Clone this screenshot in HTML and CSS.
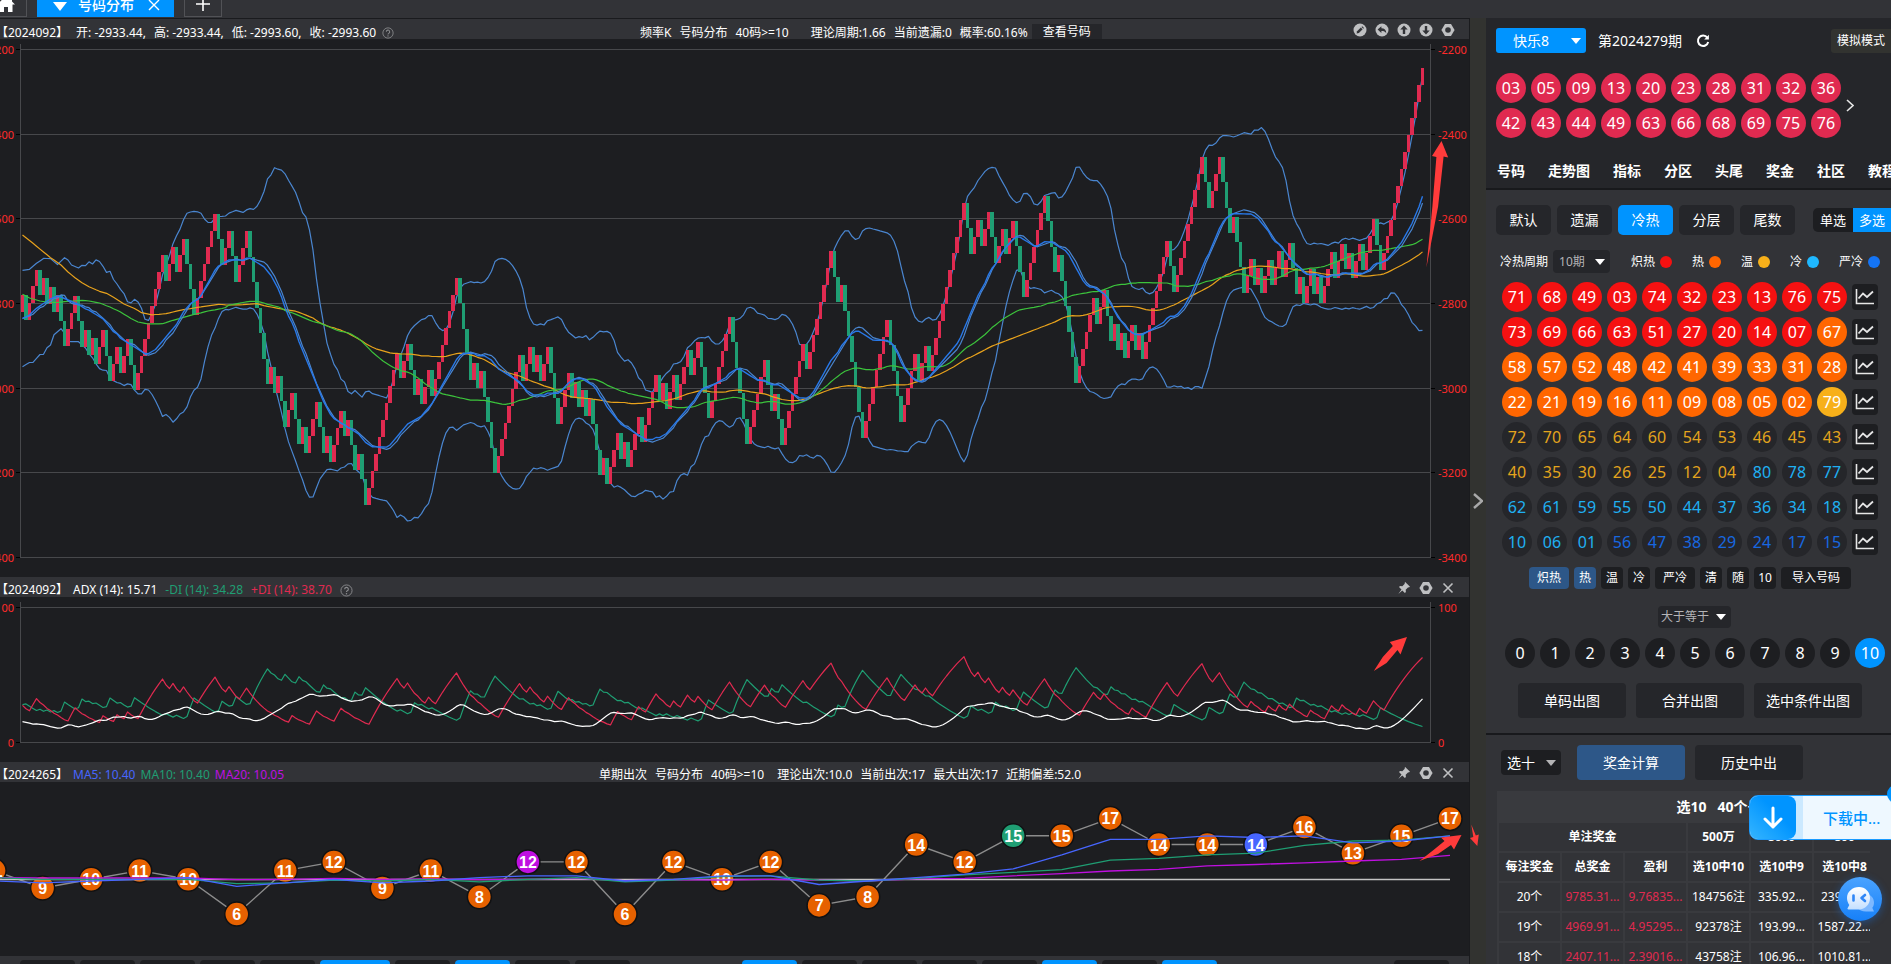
FILE: index.html
```html
<!DOCTYPE html>
<html lang="zh-CN">
<head>
<meta charset="utf-8">
<title>号码分布</title>
<link rel="stylesheet" href="styles.css">
</head>
<body>
<svg class="sprite" aria-hidden="true">
  <symbol id="i-help" viewBox="0 0 14 14"><circle cx="7" cy="7" r="6" fill="none" stroke="currentColor"/><path d="M5 5.6a2 2 0 1 1 2.9 1.8c-.6.3-.9.6-.9 1.3" fill="none" stroke="currentColor" stroke-width="1.2"/><circle cx="7" cy="10.4" r=".8" fill="currentColor"/></symbol>
  <symbol id="i-edit" viewBox="0 0 14 14"><circle cx="7" cy="7" r="6.5" fill="currentColor"/><path d="M3.6 10.6l.5-2.3 3.7-3.8 1.8 1.8-3.7 3.7z" fill="#323337"/><path d="M8.5 3.9l.7-.7 1.8 1.8-.7.7z" fill="#323337"/></symbol>
  <symbol id="i-undo" viewBox="0 0 14 14"><circle cx="7" cy="7" r="6.5" fill="currentColor"/><path d="M2.6 6.6L6.4 3.2v2c3 0 4.8 1.6 4.9 5.2-1-1.700-2.400-2.300-4.900-2.300v1.900z" fill="#323337"/></symbol>
  <symbol id="i-up" viewBox="0 0 14 14"><circle cx="7" cy="7" r="6.500" fill="currentColor"/><path d="M7 2.600l3.700 4H8.200V11H5.800V6.600H3.300z" fill="#323337"/></symbol>
  <symbol id="i-down" viewBox="0 0 14 14"><circle cx="7" cy="7" r="6.500" fill="currentColor"/><path d="M7 11.400l3.700-4H8.200V3H5.800v4.400H3.300z" fill="#323337"/></symbol>
  <symbol id="i-nut" viewBox="0 0 14 14"><path d="M4 1h6l3.600 6L10 13H4L.4 7z" fill="currentColor"/><circle cx="7" cy="7" r="2.800" fill="#323337"/></symbol>
  <symbol id="i-pin" viewBox="0 0 14 14"><path d="M8.200 1l4.800 4.800-1.200.6-.6-.2-2.500 2.500.2 2.300-1 1L5.300 9.400 1.300 13l3.200-4.500L2 6l1-1 2.300.2 2.500-2.500-.2-.6z" fill="currentColor"/></symbol>
  <symbol id="i-close" viewBox="0 0 14 14"><path d="M2.500 2.500l9 9m0-9l-9 9" stroke="currentColor" stroke-width="1.600" fill="none"/></symbol>
  <symbol id="i-trend" viewBox="0 0 20 18"><path d="M1.500 1v14.500H19" fill="none" stroke="currentColor" stroke-width="1.600"/><path d="M3.500 10.500l4.500-5 4 3.500 6-5.500" fill="none" stroke="currentColor" stroke-width="1.800"/></symbol>
</svg>

<header class="tabs">
  <button class="tab tab-home" aria-label="首页"><svg class="home" viewBox="0 0 18 18"><path d="M9 1L0 9.500h2.500V17H7v-5h4v5h4.500V9.500H18L15 6.600V2.500h-2.200v2z" fill="#fff"/></svg></button>
  <div class="tab tab-active">
    <svg class="tab-arrow" viewBox="0 0 14 9"><path d="M0 0h14L7 9z" fill="#fff"/></svg>
    <span>号码分布</span>
    <button class="tab-close" aria-label="关闭"><svg viewBox="0 0 12 12"><path d="M1 1l10 10M11 1L1 11" stroke="#fff" stroke-width="1.400"/></svg></button>
  </div>
  <button class="tab tab-add" aria-label="新增"><svg viewBox="0 0 14 14"><path d="M7 0v14M0 7h14" stroke="#fff" stroke-width="1.600"/></svg></button>
</header>

<div class="body">
  <main class="charts">
    <section class="pane">
      <div class="pane-head pane-head-first">
        <div class="info info-ohlc"><span>【2024092】</span><span>开: -2933.44,</span><span>高: -2933.44,</span><span>低: -2993.60,</span><span>收: -2993.60</span><svg class="help"><use href="#i-help"/></svg></div>
        <div class="center"><span>频率K</span><span>号码分布</span><span class="wide">40码&gt;=10</span><span>理论周期:1.66</span><span>当前遗漏:0</span><span>概率:60.16%</span><button class="view">查看号码</button></div>
        <div class="tools">
          <button aria-label="编辑"><svg><use href="#i-edit"/></svg></button><button aria-label="撤销"><svg><use href="#i-undo"/></svg></button><button aria-label="上移"><svg><use href="#i-up"/></svg></button><button aria-label="下移"><svg><use href="#i-down"/></svg></button><button aria-label="设置"><svg><use href="#i-nut"/></svg></button>
        </div>
      </div>
      <svg id="kchart" class="plot" viewBox="0 39 1469 538"></svg>
    </section>
    <section class="pane">
      <div class="pane-head">
        <div class="info info-adx"><span>【2024092】</span><span>ADX (14): 15.71</span><span class="green">-DI (14): 34.28</span><span class="red">+DI (14): 38.70</span><svg class="help"><use href="#i-help"/></svg></div>
        <div class="tools">
          <button aria-label="固定"><svg><use href="#i-pin"/></svg></button><button aria-label="设置"><svg><use href="#i-nut"/></svg></button><button aria-label="关闭"><svg><use href="#i-close"/></svg></button>
        </div>
      </div>
      <svg id="adx" class="plot" viewBox="0 597 1469 165"></svg>
    </section>
    <section class="pane">
      <div class="pane-head">
        <div class="info"><span>【2024265】</span><span class="blue">MA5: 10.40</span><span class="green">MA10: 10.40</span><span class="purple">MA20: 10.05</span></div>
        <div class="center center-counts"><span>单期出次</span><span>号码分布</span><span class="wide">40码&gt;=10</span><span>理论出次:10.0</span><span>当前出次:17</span><span>最大出次:17</span><span>近期偏差:52.0</span></div>
        <div class="tools">
          <button aria-label="固定"><svg><use href="#i-pin"/></svg></button><button aria-label="设置"><svg><use href="#i-nut"/></svg></button><button aria-label="关闭"><svg><use href="#i-close"/></svg></button>
        </div>
      </div>
      <svg id="counts" class="plot" viewBox="0 782 1469 174"></svg>
    </section>
    <div class="strip" id="strip"></div>
  </main>

  <button class="gutter" aria-label="收起"><svg viewBox="0 0 10 16"><path d="M1 1l8 7-8 7" fill="none" stroke="#a9a9a9" stroke-width="2.400"/></svg></button>

  <aside class="panel">
    <section class="draw">
      <div class="draw-head">
        <button class="game"><span>快乐8</span><i class="caret"></i></button>
        <span class="issue">第2024279期</span>
        <button class="plain" aria-label="刷新"><svg class="refresh" viewBox="0 0 14 14"><path d="M11.300 3.600A5.200 5.200 0 1 0 12.200 8" fill="none" stroke="#fff" stroke-width="2"/><path d="M12.900.8v4.800H8.200z" fill="#fff"/></svg></button>
        <button class="mode">模拟模式</button>
      </div>
      <div class="result">
        <div class="balls" id="result"></div>
        <button class="plain" aria-label="下一期"><svg class="next" viewBox="0 0 8 13"><path d="M1 1l6 5.500L1 12" fill="none" stroke="#e4e4e4" stroke-width="1.600"/></svg></button>
      </div>
      <nav class="nav"><a href="#a1">号码</a><a href="#a2">走势图</a><a href="#a3">指标</a><a href="#a4">分区</a><a href="#a5">头尾</a><a href="#a6">奖金</a><a href="#a7">社区</a><a href="#a8">教程</a></nav>
    </section>

    <section class="pick">
      <div class="modes">
        <button>默认</button><button>遗漏</button><button class="on">冷热</button><button>分层</button><button>尾数</button>
        <div class="seg"><button>单选</button><button class="on">多选</button></div>
      </div>
      <div class="legend">
        <label class="period" for="period">冷热周期</label>
        <span class="select select-period"><select id="period"><option>10期</option></select><i class="caret"></i></span>
        <span class="key">炽热<i class="dot c-red"></i></span><span class="key">热<i class="dot c-orange"></i></span><span class="key">温<i class="dot c-amber"></i></span><span class="key">冷<i class="dot c-cyan"></i></span><span class="key">严冷<i class="dot c-blue"></i></span>
      </div>
      <div class="grid" id="grid"></div>
      <div class="chips"><button class="w40 on">炽热</button><button class="on">热</button><button>温</button><button>冷</button><button class="w40">严冷</button><button>清</button><button>随</button><button>10</button><button class="w70">导入号码</button></div>
      <span class="select select-op"><select id="op" aria-label="条件"><option>大于等于</option></select><i class="caret"></i></span>
      <div class="amount" id="amount"></div>
      <div class="actions"><button>单码出图</button><button>合并出图</button><button>选中条件出图</button></div>
    </section>

    <section class="prize">
      <div class="prize-head">
        <span class="select select-play"><select id="play" aria-label="玩法"><option>选十</option></select><i class="caret caret-dim"></i></span>
        <button class="on">奖金计算</button><button>历史中出</button>
      </div>
      <div class="table-wrap">
        <table>
          <colgroup><col><col><col><col><col><col><col class="rest"></colgroup>
          <thead>
            <tr class="title"><th colspan="7">选10&nbsp;&nbsp; 40个号码</th></tr>
            <tr><th colspan="3">单注奖金</th><th>500万</th><th>8000</th><th>800</th><th>80</th></tr>
            <tr><th>每注奖金</th><th>总奖金</th><th>盈利</th><th>选10中10</th><th>选10中9</th><th>选10中8</th><th>选10中7</th></tr>
          </thead>
          <tbody>
            <tr><td>20个</td><td class="red">9785.31...</td><td class="red">9.76835...</td><td>184756注</td><td>335.92...</td><td>239.43...</td><td></td></tr>
            <tr><td>19个</td><td class="red">4969.91...</td><td class="red">4.95295...</td><td>92378注</td><td>193.99...</td><td>1587.22...</td><td></td></tr>
            <tr><td>18个</td><td class="red">2407.11...</td><td class="red">2.39016...</td><td>43758注</td><td>106.96...</td><td>1010.81...</td><td></td></tr>
          </tbody>
        </table>
      </div>
    </section>

    <div class="download">
      <span class="download-icon"><svg viewBox="0 0 20 24"><path d="M10 2v19M2 13l8 8 8-8" fill="none" stroke="#fff" stroke-width="3" stroke-linecap="round" stroke-linejoin="round"/></svg></span>
      <span class="download-text">下载中...</span>
      <i class="download-badge"></i>
    </div>
    <button class="chat" aria-label="客服">
      <svg viewBox="0 0 44 44">
        <defs><linearGradient id="bub" x1="0" y1="0" x2="0" y2="1"><stop offset="0" stop-color="#fff"/><stop offset="1" stop-color="#c4dfff"/></linearGradient></defs>
        <path d="M29 17c4 1 7 4 7 8.500 0 2-.6 4-1.700 5.300L36 34.500h-8c-4 0-7-1.500-8.500-4z" fill="#7db8ff"/>
        <path d="M21 10c6.200 0 11 4.700 11 11s-4.800 11.500-11 11.500H10.500c-1 0-1.300-.8-.8-1.500l1.600-3C10 26 9 23.800 9 21c0-6.300 5.500-11 12-11z" fill="url(#bub)"/>
        <path d="M15.500 18.500v5M27 18l-3.500 3 3.500 3" fill="none" stroke="#2f86f6" stroke-width="2.600" stroke-linecap="round" stroke-linejoin="round"/>
      </svg>
    </button>
  </aside>
</div>

<svg class="marks" viewBox="0 0 1891 964" aria-hidden="true">
  <g fill="#ff3b3b">
    <path d="M1441.500 141l6.700 16.500-4.600-1-5.500 50-11.700 61 6-61 4-49.500-4.400-1z"/>
    <path d="M1407 637l-6.500 17.500-3-4.500-11 13-12.700 8 9-14 10-11-3-4z"/>
    <path d="M1461.500 835l-7.500 14.500-3-4.500-13 9-18.500 7 14-11 11-9-3.500-3.500z"/>
    <path d="M1471.300 824.500l4.500 11 3-1-1.500 11.500-7.300-8 3.300-1z"/>
  </g>
</svg>
<script src="script.js"></script>
</body>
</html>
```

FILE: styles.css
```css
* { box-sizing: border-box; }

html, body { height: 100%; }

body {
  margin: 0;
  display: flex;
  flex-direction: column;
  overflow: hidden;
  background: #323337;
  color: #fff;
  font: 12px/16px "Noto Sans", "Noto Sans CJK SC", sans-serif;
}

button, select {
  margin: 0;
  padding: 0;
  border: 0;
  background: none;
  color: inherit;
  font: inherit;
  white-space: nowrap;
  cursor: pointer;
}

i { font-style: normal; }

.sprite { position: absolute; width: 0; height: 0; }

.red { color: #e02a50; }
.green { color: #1f9e73; }
.blue { color: #4766ff; }
.purple { color: #bf10e0; }

/* window tabs, scrolled partly out of view */
.tabs {
  flex: none;
  height: 18px;
  display: flex;
  align-items: flex-end;
  gap: 10px;
  padding-bottom: 1px;
}

.tab {
  height: 26px;
  display: flex;
  align-items: center;
  border: 1px solid #515256;
}

.tab-home { width: 27px; border-left: 0; }
.home { width: 18px; height: 18px; margin-left: -3px; }

.tab-active {
  width: 137px;
  padding: 2px 14px 0 16px;
  border: 0;
  background: #0094ff;
  font-size: 14px;
  line-height: 20px;
  font-weight: 500;
}
.tab-arrow { width: 14px; height: 9px; margin: 3px 11px 0 0; }
.tab-close { margin-left: auto; display: flex; }
.tab-close svg { width: 12px; height: 12px; }
.tab-add { width: 38px; justify-content: center; }
.tab-add svg { width: 14px; height: 14px; }

.body { flex: 1; min-height: 0; display: flex; }

/* charts */
.charts {
  flex: 1;
  min-width: 0;
  display: flex;
  flex-direction: column;
  border-right: 1px solid #1a1b1e;
}

.pane { flex: none; background: #1d1e21; }

.pane-head {
  position: relative;
  height: 20px;
  display: flex;
  align-items: flex-end;
  justify-content: space-between;
  background: #323337;
  line-height: 14px;
  white-space: nowrap;
}
.pane-head-first { height: 21px; border-top: 1px solid #1a1b1e; line-height: 12px; }

.info { display: flex; align-items: center; gap: 5px; margin-left: -4px; }
.info-ohlc, .info-adx { gap: 8px; }
.info-adx span:first-child { margin-right: -3px; }
.help { width: 13px; height: 13px; color: #8b8c8f; }
.info-ohlc .help { width: 12px; height: 12px; margin-left: -2px; }

.center {
  position: absolute;
  left: 640px;
  bottom: 0;
  display: flex;
  align-items: flex-end;
  gap: 8px;
}
.center .wide { margin-right: 14px; }
.center-counts { left: 599px; }
.center-counts .wide { margin-right: 5px; }
.view { width: 70px; height: 15px; margin-left: -4px; background: #25262a; }

.tools { display: flex; gap: 8px; padding: 0 14px 2px 0; color: #bfc0c2; }
.tools button { display: flex; }
.tools svg { width: 14px; height: 14px; }

.plot { display: block; width: 100%; height: auto; }
.plot text { font: 11px "Noto Sans", "Noto Sans CJK SC", sans-serif; fill: #ff2b2b; }
.plot .node-label { font: bold 16px "Liberation Sans", Arial, sans-serif; fill: #fff; text-anchor: middle; }
.axis { stroke: #47484b; fill: none; }
.tick { stroke: #000; fill: none; }
.line { fill: none; stroke-linejoin: round; }
.candles { shape-rendering: crispEdges; }

.strip {
  flex: 1;
  min-height: 0;
  overflow: hidden;
  display: flex;
  gap: 5px;
  padding: 4px 20px 0;
  background: #323337;
}
.strip button {
  flex: none;
  width: 55px;
  height: 24px;
  border-radius: 4px;
  background: #1d1e21;
}
.strip .long { width: 70px; }
.strip .on { background: #0094ff; }
.strip .after-gap { margin-left: 107px; }
.strip .last { margin-left: auto; }

.gutter {
  flex: none;
  width: 16px;
  display: flex;
  align-items: center;
  justify-content: center;
  background: #323330;
}
.gutter svg { width: 10px; height: 16px; margin-top: 20px; }

/* right panel */
.panel {
  position: relative;
  flex: none;
  width: 405px;
  overflow: hidden;
  display: flex;
  flex-direction: column;
}

.panel section { flex: none; }

.draw {
  height: 172px;
  padding: 10px 0 0 10px;
  background: #25262a;
  border-bottom: 2px solid #18191c;
}

.draw-head { display: flex; align-items: center; font-size: 14px; line-height: 20px; }

.game {
  width: 90px;
  height: 25px;
  display: flex;
  align-items: center;
  justify-content: space-between;
  padding: 0 5px 0 17px;
  border-radius: 3px;
  background: #0094ff;
}
.issue { margin: 0 14px 0 12px; }
.plain { display: flex; }
.refresh { width: 14px; height: 14px; }
.mode {
  margin-left: auto;
  width: 60px;
  height: 24px;
  flex: none;
  border-radius: 3px 0 0 3px;
  background: #323330;
  font-size: 12px;
}

.caret {
  flex: none;
  border: 5px solid transparent;
  border-top: 6px solid #fff;
  border-bottom: 0;
  pointer-events: none;
}
.caret-dim { border-top-color: #b4b4b6; }

.result { display: flex; align-items: center; gap: 5px; margin-top: 20px; }
.balls { display: grid; grid-template-columns: repeat(10, 30px); gap: 5px; }
.ball {
  width: 30px;
  height: 30px;
  border-radius: 50%;
  display: flex;
  align-items: center;
  justify-content: center;
  font-size: 16px;
  line-height: 30px;
  background: #25262a;
}
.balls .ball { background: #e02a50; }
.next { width: 8px; height: 13px; }

.nav {
  display: flex;
  gap: 23px;
  margin-top: 23px;
  padding-left: 1px;
  white-space: nowrap;
  font-size: 14px;
  line-height: 20px;
  font-weight: bold;
}
.nav a { color: #fff; text-decoration: none; }

.pick { padding: 15px 0 15px 10px; border-bottom: 2px solid #18191c; }

.modes { display: flex; align-items: center; gap: 6px; font-size: 14px; }
.modes > button { width: 55px; height: 30px; border-radius: 5px; background: #25262a; }
.modes .on { background: #0094ff; }
.seg { display: flex; margin: 0 0 0 auto; border-radius: 5px 0 0 5px; overflow: hidden; background: #1d1e21; font-size: 13px; }
.seg button { width: 40px; height: 24px; }
.seg .on { width: 38px; }

.legend { display: flex; align-items: center; margin-top: 15px; padding-left: 4px; white-space: nowrap; }
.period { margin-right: 5px; }
.select { position: relative; display: inline-flex; align-items: center; border-radius: 4px; background: #25262a; color: #b4b4b6; }
.select select { appearance: none; width: 100%; height: 100%; outline: 0; }
.select .caret { position: absolute; right: 5px; }
.select-period { flex: none; width: 57px; height: 23px; padding-left: 6px; margin-right: 21px; }
.key { flex: none; display: flex; align-items: center; gap: 5px; margin-right: 20px; }
.dot { width: 12px; height: 12px; border-radius: 50%; }
.c-red { background: #f51111; }
.c-orange { background: #ff6600; }
.c-amber { background: #f7b01a; }
.c-cyan { background: #1fb8ff; }
.c-blue { background: #1474f5; }

.grid {
  display: grid;
  grid-template-columns: repeat(10, 30px) 26px;
  gap: 5px;
  align-items: center;
  margin: 9px 0 0 6px;
}
.t-amber { color: #e3a41d; }
.t-cyan { color: #1fb0f2; }
.t-blue { color: #1768e0; }
.trend {
  width: 26px;
  height: 26px;
  display: flex;
  align-items: center;
  justify-content: center;
  border-radius: 4px;
  background: #1d1e21;
  color: #e6e6e6;
}
.trend svg { width: 20px; height: 18px; }

.chips { display: flex; gap: 5px; margin: 10px 0 0 33px; }
.chips button { width: 22px; height: 22px; border-radius: 4px; background: #1d1e21; }
.chips .w40 { width: 40px; }
.chips .w70 { width: 70px; }
.chips .on { background: #2d5788; }

.select-op { display: flex; width: 73px; height: 22px; margin: 17px 0 0 162px; padding-left: 3px; }

.amount { display: flex; gap: 5px; margin: 10px 0 0 9px; }
.amount .ball { background: #1d1e21; }
.amount .on { background: #0094ff; }

.actions { display: flex; gap: 10px; margin: 15px 0 0 22px; }
.actions button, .prize-head button {
  width: 108px;
  height: 35px;
  border-radius: 4px;
  background: #25262a;
  font-size: 14px;
  line-height: 20px;
}

.prize { padding: 10px 21px 0 11px; }
.prize-head { display: flex; align-items: center; gap: 10px; padding-left: 4px; }
.prize-head .on { background: #2d5788; }
.select-play { width: 60px; height: 25px; margin-right: 6px; padding-left: 6px; background: #1d1e21; color: #fff; font-size: 14px; }

.table-wrap { margin-top: 11px; overflow: hidden; }
table {
  table-layout: fixed;
  width: 456px;
  border-spacing: 0;
  border-collapse: collapse;
}
col { width: 63px; }
.rest { width: 78px; }
th, td {
  height: 30px;
  padding: 0;
  border: 2px solid #393a3e;
  text-align: center;
  white-space: nowrap;
}
.title th { background: #393a3e; font-size: 14px; }

/* floating widgets */
.download {
  position: absolute;
  left: 263px;
  top: 777px;
  width: 160px;
  height: 45px;
  display: flex;
  align-items: center;
  border: 1px solid #1a9bff;
  border-radius: 9px;
  background: linear-gradient(90deg, #cbe9ff 53px, #eef8ff 53px);
}
.download-icon {
  width: 46px;
  height: 43px;
  display: flex;
  align-items: center;
  justify-content: center;
  border-radius: 8px;
  background: linear-gradient(45deg, #35b5ff, #0094ff 60%);
}
.download-icon svg { width: 20px; height: 24px; }
.download-text { margin-left: 27px; color: #0094ff; font-size: 15px; line-height: 20px; font-weight: 500; }
.download-badge { position: absolute; left: 137px; top: -11px; width: 18px; height: 18px; border-radius: 50%; background: #0094ff; }

.chat {
  position: absolute;
  left: 352px;
  top: 859px;
  width: 44px;
  height: 44px;
  border-radius: 50%;
  background: linear-gradient(180deg, #4aa3ff, #1780f8);
  box-shadow: 0 2px 8px rgba(20, 120, 250, .4);
}
.chat svg { display: block; width: 44px; height: 44px; }

.marks { position: absolute; left: 0; top: 0; width: 100%; height: auto; pointer-events: none; }
```

FILE: script.js
```js
const NS = 'http://www.w3.org/2000/svg';

function add(parent, name, attrs, text) {
  const el = document.createElementNS(NS, name);
  for (const key in attrs) el.setAttribute(key, attrs[key]);
  if (text !== undefined) el.textContent = text;
  parent.appendChild(el);
  return el;
}

function line(parent, points, stroke, width) {
  const d = points.map(p => p[0].toFixed(1) + ',' + p[1].toFixed(1)).join(' ');
  add(parent, 'polyline', { points: d, stroke, 'stroke-width': width || 1.2, class: 'line' });
}

const mean = list => list.reduce((a, b) => a + b, 0) / list.length;

/* Linear interpolation through [index, value] anchors */
function sample(anchors, i) {
  for (let k = 1; k < anchors.length; k++) {
    const [a, b] = [anchors[k - 1], anchors[k]];
    if (i <= b[0]) return a[1] + (b[1] - a[1]) * (i - a[0]) / (b[0] - a[0]);
  }
  return anchors[anchors.length - 1][1];
}

/* U: hit, D: miss */
const RUN = [
  'UDUUUDUDUD', 'UDDUUUDDUD', 'UDUUDDUUDU', 'UDDUUUUUUU', 'UDUUDUUDDD',
  'UUUUUUDDUU', 'DDUUUDDDDD', 'DUDUDDUUDD', 'UDUUUDDUDU', 'UUDUDDUDDU',
  'UUUUUUUUDU', 'UDDUDUUDUU', 'UUUUUDDDDU', 'DUDDDDUUUU', 'UUUDUUDUDU',
  'UDDDUUUDUD', 'UDUDDDUDUU', 'UDUDUUUDUU', 'UUDUDUUDUU', 'UDUUDDDUUU',
  'UUUDDDDDUU', 'UUUDDUDDUU', 'UUUUDUUUUU', 'UUDDUDDDDD', 'DUUUUUUUDD',
  'DDUUUUDUUD', 'UUUUUUUUUU', 'DDUUDUUDDU', 'UDUUDDDUUU', 'UUUDDDUDDD',
  'DDUUUUUDUU', 'DDUDUDUUDU', 'DUUUUUUUDD', 'UUUUUUUUDD', 'UUUDDDUDDD',
  'UUDUDUUDUU', 'DUUDDUDUUD', 'UDUUUDUUDU', 'DUUDUUUDDU', 'UUUUUUUUUUU'
].join('');

const UP = 39.84, DOWN = 60.16;
const SCALE = 508 / 1200;
const yOf = v => 49.5 + (-2200 - v) * SCALE;
const vOf = y => -2200 - (y - 49.5) / SCALE;
const xOf = i => 22.5 + 3.5 * i;

const bars = [];
let price = vOf(311.5);
for (const step of RUN) {
  const open = price;
  price += step === 'U' ? UP : -DOWN;
  bars.push({ up: step === 'U', open, close: price, high: Math.max(open, price), low: Math.min(open, price) });
}
const closes = bars.map(b => b.close);

const seedUpper = [[0, 270.3], [2, 269.3], [4, 263.3], [6, 258.4], [8, 258.6], [10, 264.5], [12, 257.7], [13, 260], [14, 265], [16, 268], [17, 265.3], [18, 265.6], [19, 262.5]];
const seedLower = [[0, 366.7], [2, 362.5], [3, 362.3], [5, 354.5], [6, 354.3], [7, 347.7], [8, 345], [9, 334.7], [11, 328.7], [12, 333], [13, 341.5], [16, 341.7], [18, 348], [19, 352]];
const seedFast = [[0, 318.5], [2, 315], [4, 308.3], [6, 303.5], [8, 299], [10, 296], [11, 297], [13, 300], [16, 304.5], [20, 313]];
const seedMid = [[0, 294.3], [2, 298], [5, 301], [7, 302], [10, 302.5], [13, 301.3], [17, 300.4], [19, 301], [22, 303], [25, 307], [28, 312], [31, 318.5], [33, 322], [36, 324], [40, 323.7], [43, 320.3], [46, 317.3], [49, 314.5], [53, 311], [57, 308.5], [59, 306.5]];
const seedSlow = [[0, 235], [3, 243.3], [6, 252], [8, 257.7], [11, 265], [13, 272], [15, 277.7], [17, 282.7], [19, 286.7], [22, 291.3], [24, 293.3], [26, 297.3], [29, 304], [32, 308.5], [34, 312.7], [37, 314.8], [41, 313.7], [45, 310.3], [49, 308], [52, 306.3], [56, 304.3], [59, 305], [63, 304.7], [67, 303.7], [69, 305.7], [72, 307.7], [75, 309.7], [78, 311.2], [80, 313.7], [83, 318], [85, 322.7], [87, 325.7], [90, 329.7]];

function average(period, seed) {
  return closes.map((_, i) => [xOf(i), i < period - 1 ? sample(seed, i) : yOf(mean(closes.slice(i - period + 1, i + 1)))]);
}

/* Middle line averages the N-1 bars before the current one */
function bands(period) {
  const out = { upper: [], mid: [], lower: [] };
  closes.forEach((_, i) => {
    let u, m, l;
    if (i < period - 1) {
      u = sample(seedUpper, i);
      l = sample(seedLower, i);
      m = (u + l) / 2;
    } else {
      const win = closes.slice(i - period + 1, i + 1);
      const avg = mean(win);
      const dev = Math.sqrt(mean(win.map(c => (c - avg) ** 2)));
      const mid = mean(win.slice(0, -1));
      u = yOf(mid + 2 * dev);
      m = yOf(mid);
      l = yOf(mid - 2 * dev);
    }
    out.upper.push([xOf(i), u]);
    out.mid.push([xOf(i), m]);
    out.lower.push([xOf(i), l]);
  });
  return out;
}

function frame(svg, levels, top, bottom) {
  for (const [label, y] of levels) {
    add(svg, 'path', { d: `M20 ${y}H1431`, class: 'axis' });
    add(svg, 'path', { d: `M16 ${y}H20M1431 ${y}H1435`, class: 'tick' });
    add(svg, 'text', { x: 14, y: y + 4, 'text-anchor': 'end' }, label);
    add(svg, 'text', { x: 1438, y: y + 4 }, label);
  }
  add(svg, 'path', { d: `M20.5 ${top}V${bottom}M1430.500 ${top}V${bottom}`, class: 'axis' });
}

function drawK() {
  const svg = document.getElementById('kchart');
  frame(svg, [['-2200', 49.5], ['-2400', 134.5], ['-2600', 218.5], ['-2800', 303.5], ['-3000', 388.5], ['-3200', 472.5], ['-3400', 557.5]], 44, 558);
  const boll = bands(20);
  line(svg, boll.upper, '#4a86d0');
  line(svg, boll.lower, '#4a86d0');
  for (const [color, up] of [['#e02a50', true], ['#1f9e73', false]]) {
    let d = '';
    bars.forEach((b, i) => {
      if (b.up === up) d += `M${xOf(i) - 1.75} ${yOf(b.high).toFixed(1)}h3.500V${yOf(b.low).toFixed(1)}h-3.500z`;
    });
    add(svg, 'path', { d, fill: color, class: 'candles' });
  }
  line(svg, average(90, seedSlow), '#e8a21c');
  line(svg, average(60, seedMid), '#3cc43c');
  line(svg, boll.mid, '#4a86d0');
  line(svg, average(20, seedFast), '#2878e8', 1.4);
}

function drawAdx() {
  const svg = document.getElementById('adx');
  frame(svg, [['100', 607.5], ['0', 742.5]], 602, 743);
  const y = v => 742.5 - v * 1.35;
  const n = 14;
  let tr = 47, plus = 12.9, minus = 13.2, adx = 15.5;
  const rows = { adx: [], plus: [], minus: [] };
  bars.forEach((b, i) => {
    if (i > 0) {
      const p = bars[i - 1];
      const up = b.high - p.high, down = p.low - b.low;
      const range = Math.max(b.high, p.close) - Math.min(b.low, p.close);
      tr += (range - tr) / n;
      plus += ((up > down && up > 0.01 ? up : 0) - plus) / n;
      minus += ((down > up && down > 0.01 ? down : 0) - minus) / n;
      adx += (100 * Math.abs(plus - minus) / (plus + minus) - adx) / n;
    }
    rows.adx.push([xOf(i), y(adx)]);
    rows.plus.push([xOf(i), y(100 * plus / tr)]);
    rows.minus.push([xOf(i), y(100 * minus / tr)]);
  });
  line(svg, rows.minus, '#1f9e73');
  line(svg, rows.plus, '#e02a50');
  line(svg, rows.adx, '#ffffff');
}

function drawCounts() {
  const svg = document.getElementById('counts');
  const past = [10, 10, 11, 10, 10, 10, 10, 11, 10, 10, 11, 10, 11, 10, 11, 10, 9, 10, 9];
  const now = [11, 9, 10, 11, 10, 6, 11, 12, 9, 11, 8, 12, 12, 6, 12, 10, 12, 7, 8, 14, 12, 15, 15, 17, 14, 14, 14, 16, 13, 15, 17];
  const all = past.concat(now);
  const x = i => 1450 - 48.53 * (now.length - 1 - i);
  const y = v => 879.3 - (v - 10) * 8.7;
  const ma = n => now.map((_, i) => [x(i), y(mean(all.slice(i + past.length - n + 1, i + past.length + 1)))]);
  const tint = { 11: '#bf10e0', 21: '#1f9e73', 26: '#4766ff' };

  line(svg, now.map((v, i) => [x(i), y(v)]), '#8c8c8c', 1.4);
  now.forEach((v, i) => {
    add(svg, 'circle', { cx: x(i), cy: y(v), r: 12, fill: tint[i] || '#e66100', stroke: '#101113', 'stroke-width': 1.5 });
    add(svg, 'text', { x: x(i), y: y(v) + 6, class: 'node-label' }, v);
  });
  add(svg, 'path', { d: 'M0 879.5H1450', stroke: '#c4c4c4', 'stroke-width': 1.6, class: 'line' });
  line(svg, ma(20), '#bf10e0', 1.3);
  line(svg, ma(10), '#1f9e73', 1.3);
  line(svg, ma(5), '#4766ff', 1.3);
}

function button(parent, className, text, label) {
  const el = document.createElement('button');
  el.className = className;
  if (text !== undefined) el.textContent = text;
  if (label) el.setAttribute('aria-label', label);
  parent.appendChild(el);
  return el;
}

function fillPanel() {
  const result = document.getElementById('result');
  for (const n of '03 05 09 13 20 23 28 31 32 36 42 43 44 49 63 66 68 69 75 76'.split(' ')) {
    const ball = document.createElement('span');
    ball.className = 'ball';
    ball.textContent = n;
    result.appendChild(ball);
  }

  const grid = document.getElementById('grid');
  const order = ('71 68 49 03 74 32 23 13 76 75 73 69 66 63 51 27 20 14 07 67 ' +
    '58 57 52 48 42 41 39 33 31 28 22 21 19 16 11 09 08 05 02 79 ' +
    '72 70 65 64 60 54 53 46 45 43 40 35 30 26 25 12 04 80 78 77 ' +
    '62 61 59 55 50 44 37 36 34 18 10 06 01 56 47 38 29 24 17 15').split(' ');
  order.forEach((n, i) => {
    const heat = i < 19 ? 'red' : i < 39 ? 'orange' : i < 57 ? 'amber' : i < 73 ? 'cyan' : 'blue';
    button(grid, 'ball ' + (i < 40 ? 'c-' : 't-') + heat, n);
    if (i % 10 === 9) {
      button(grid, 'trend', undefined, '走势').innerHTML = '<svg><use href="#i-trend"/></svg>';
    }
  });

  const amount = document.getElementById('amount');
  for (let n = 0; n <= 10; n++) button(amount, 'ball' + (n === 10 ? ' on' : ''), n);

  const strip = document.getElementById('strip');
  ['', '', '', '', '', 'long on', '', 'on', '', '', 'after-gap on', '', '', '', '', 'on', '', 'on', 'last']
    .forEach((name, i) => button(strip, name, undefined, '指标' + (i + 1)));
}

drawK();
drawAdx();
drawCounts();
fillPanel();
```
